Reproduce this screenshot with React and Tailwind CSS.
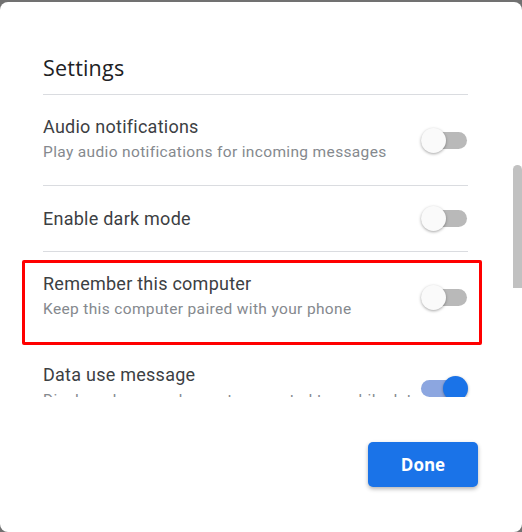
import React from "react";

const Toggle = ({ on = false }) => {
  return (
    <div className="relative h-[25px] w-[47px] shrink-0">
      <div
        className={
          on
            ? "absolute left-0 right-[1px] top-[4px] h-[17px] rounded-full bg-[#8ca6e0]"
            : "absolute left-0 right-[1px] top-[4px] h-[17px] rounded-full bg-[#b9b9b9]"
        }
      />
      <div
        className={
          on
            ? "absolute right-0 top-0 h-[25px] w-[25px] rounded-full bg-[#1a73e8] shadow-[0_1px_3px_rgba(0,0,0,0.35)]"
            : "absolute left-0 top-0 h-[25px] w-[25px] rounded-full bg-[#fafafa] shadow-[0_1px_3px_rgba(0,0,0,0.35)]"
        }
      />
    </div>
  );
};

const Row = ({ title, subtitle, on, height, last, children }) => {
  return (
    <div
      className={`relative flex items-center justify-between ${height} ${
        last ? "" : "border-b border-[#dadce0]"
      }`}
    >
      <div className={subtitle ? "self-start pt-[20px]" : ""}>
        <div className="text-[18px] leading-[24px] tracking-[0.25px] text-[#3c4043]">{title}</div>
        {subtitle && (
          <div className="text-[15.5px] leading-[26px] tracking-[0.35px] text-[#85898e]">{subtitle}</div>
        )}
      </div>
      <Toggle on={on} />
      {children}
    </div>
  );
};

export default function App() {
  return (
    <div className="h-[532px] w-[522px] overflow-hidden bg-[#717171] pt-[2px] font-['Roboto',sans-serif]">
      <div className="flex h-[530px] flex-col rounded-[8px] bg-white">
        {/* Scrolling settings list */}
        <div className="flex h-[395px] overflow-hidden">
          <div className="w-[468px] shrink-0 pl-[43px]">
            <div className="h-[93px] border-b border-[#dadce0] pt-[52px]">
              <h2 className="font-['Open_Sans',sans-serif] text-[21.5px] leading-[28px] tracking-[0.2px] text-[#202124]">Settings</h2>
            </div>

            <Row
              title="Audio notifications"
              subtitle="Play audio notifications for incoming messages"
              height="h-[91px]"
            />
            <Row title="Enable dark mode" height="h-[66px]" />
            <Row
              title="Remember this computer"
              subtitle="Keep this computer paired with your phone"
              height="h-[91px]"
            >
              {/* highlight annotation */}
              <div className="pointer-events-none absolute -bottom-[3px] -left-[21px] -right-[14px] top-[8px] rounded-[2px] border-[3px] border-[#ff0000]" />
            </Row>
            <Row
              title="Data use message"
              subtitle="Display a banner when not connected to mobile data"
              on
              height="h-[91px]"
              last
            />
          </div>

          <div className="ml-auto w-[9px] shrink-0">
            <div className="mt-[163px] h-[123px] rounded-t-full bg-[#c1c1c1]" />
          </div>
        </div>

        {/* Footer */}
        <div className="flex justify-end pr-[44px] pt-[45px]">
          <button className="h-[45px] w-[110px] rounded-[5px] bg-[#1a73e8] font-['Open_Sans',sans-serif] text-[17px] font-bold text-white shadow-[0_2px_4px_rgba(0,0,0,0.3)]">
            Done
          </button>
        </div>
      </div>
    </div>
  );
}
